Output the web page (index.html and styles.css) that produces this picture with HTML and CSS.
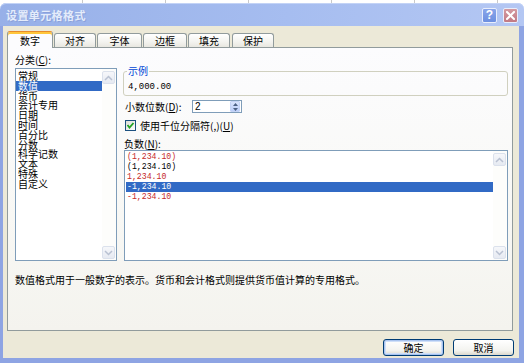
FILE: index.html
```html
<!DOCTYPE html>
<html lang="zh-CN">
<head>
<meta charset="utf-8">
<title>设置单元格格式</title>
<link rel="stylesheet" href="styles.css">
</head>
<body>
<div class="desk"></div>
<div class="window">
  <div class="titlebar">
    <span class="title">设置单元格格式</span>
    <div class="caption-buttons">
      <div class="cap-btn help">?</div>
      <div class="cap-btn close">
        <svg width="9" height="9" viewBox="0 0 9 9"><path d="M1 1 L8 8 M8 1 L1 8" stroke="#fff" stroke-width="2" stroke-linecap="square"/></svg>
      </div>
    </div>
  </div>
  <div class="frame">
    <div class="tabs">
      <div class="tab active">数字</div>
      <div class="tab w42">对齐</div>
      <div class="tab w45">字体</div>
      <div class="tab w44">边框</div>
      <div class="tab w42">填充</div>
      <div class="tab w42 last">保护</div>
    </div>
    <div class="panel">
      <div class="main">
        <div class="col-left">
          <div class="label">分类(<u>C</u>):</div>
          <div class="listbox cat">
            <div class="items">
              <div class="item">常规</div>
              <div class="item sel">数值</div>
              <div class="item">货币</div>
              <div class="item">会计专用</div>
              <div class="item">日期</div>
              <div class="item">时间</div>
              <div class="item">百分比</div>
              <div class="item">分数</div>
              <div class="item">科学记数</div>
              <div class="item">文本</div>
              <div class="item">特殊</div>
              <div class="item">自定义</div>
            </div>
            <div class="vscroll">
              <div class="sbtn"><svg width="9" height="6" viewBox="0 0 9 6"><path d="M1 5 L4.5 1.5 L8 5" fill="none" stroke="#B9C1D2" stroke-width="1.5"/></svg></div>
              <div class="sbtn"><svg width="9" height="6" viewBox="0 0 9 6"><path d="M1 1 L4.5 4.5 L8 1" fill="none" stroke="#B9C1D2" stroke-width="1.5"/></svg></div>
            </div>
          </div>
        </div>
        <div class="col-right">
          <fieldset class="sample">
            <legend>示例</legend>
            <div class="sample-value">4,000.00</div>
          </fieldset>
          <div class="row decimals">
            <span class="row-label">小数位数(<u>D</u>):</span>
            <div class="spin">
              <span class="spin-text">2</span>
              <div class="spin-btn">
                <svg width="7" height="10" viewBox="0 0 7 10"><path d="M3.5 1 L6 4 L1 4 Z M1 6 L6 6 L3.5 9 Z" fill="#4D6185"/></svg>
              </div>
            </div>
          </div>
          <div class="row check">
            <span class="checkbox">
              <svg width="9" height="9" viewBox="0 0 9 9"><path d="M1.5 4 L3.5 6.5 L7.5 2" fill="none" stroke="#21A121" stroke-width="1.8"/></svg>
            </span>
            <span>使用千位分隔符(,)(<u>U</u>)</span>
          </div>
          <div class="label neg-label">负数(<u>N</u>):</div>
          <div class="listbox neg">
            <div class="items">
              <div class="item red">(1,234.10)</div>
              <div class="item">(1,234.10)</div>
              <div class="item red">1,234.10</div>
              <div class="item sel">-1,234.10</div>
              <div class="item red">-1,234.10</div>
            </div>
            <div class="vscroll">
              <div class="sbtn"><svg width="9" height="6" viewBox="0 0 9 6"><path d="M1 5 L4.5 1.5 L8 5" fill="none" stroke="#B9C1D2" stroke-width="1.5"/></svg></div>
              <div class="sbtn"><svg width="9" height="6" viewBox="0 0 9 6"><path d="M1 1 L4.5 4.5 L8 1" fill="none" stroke="#B9C1D2" stroke-width="1.5"/></svg></div>
            </div>
          </div>
        </div>
      </div>
      <p class="desc">数值格式用于一般数字的表示。货币和会计格式则提供货币值计算的专用格式。</p>
    </div>
    <div class="buttons">
      <div class="btn default">确定</div>
      <div class="btn">取消</div>
    </div>
  </div>
</div>
</body>
</html>
```

FILE: styles.css
```css
* { box-sizing: border-box; }

html, body {
  margin: 0;
  padding: 0;
}

body {
  width: 524px;
  height: 363px;
  overflow: hidden;
  background: #ffffff;
  font-family: "Noto Sans CJK SC", "Noto Sans", sans-serif;
  font-size: 10px;
  color: #000;
}

.desk {
  height: 3px;
  background:
    repeating-linear-gradient(to right, transparent 0 82px, #c9c9c9 82px 83px),
    #ffffff;
}

.window {
  height: 360px;
  display: flex;
  flex-direction: column;
}

.titlebar {
  flex: none;
  height: 23px;
  display: flex;
  align-items: center;
  padding: 0 6px 0 6px;
  border-radius: 6px 6px 0 0;
  background: linear-gradient(to right, #97b0e8 0%, #a6bdf0 55%, #b4c7f3 100%);
  box-shadow: inset 0 1px 0 #c3d3f6;
}

.title {
  font-size: 11px;
  font-weight: bold;
  color: #e4ecfb;
  letter-spacing: 0.4px;
  text-shadow: 1px 1px 0 #8aa1da;
}

.caption-buttons {
  margin-left: auto;
  display: flex;
  gap: 6px;
  align-self: flex-start;
  margin-top: 5px;
}

.cap-btn {
  width: 15px;
  height: 15px;
  border-radius: 2px;
  border: 1px solid #e9eefc;
  display: flex;
  align-items: center;
  justify-content: center;
  color: #fff;
}

.help {
  background: linear-gradient(#8aa6ea, #6c8fe0);
  font-family: "Liberation Sans", sans-serif;
  font-weight: bold;
  font-size: 12px;
  line-height: 13px;
}

.close {
  background: linear-gradient(#d49aa1, #c27a84);
}

.frame {
  flex: 1;
  display: flex;
  flex-direction: column;
  background: #ece9d8;
  border-left: 3px solid #8ea4e3;
  border-right: 5px solid #8ea4e3;
  border-bottom: 5px solid #8ea4e3;
  padding: 5px 6px 0 4px;
}

/* tabs */
.tabs {
  display: flex;
  align-items: flex-end;
  height: 16px;
}

.tab {
  height: 14px;
  margin-left: 1px;
  border: 1px solid #919b9c;
  border-bottom: none;
  border-radius: 3px 3px 0 0;
  background: linear-gradient(#ffffff, #f3f3ef 60%, #e8e7e0);
  text-align: center;
  line-height: 13px;
  font-size: 10px;
}

.w42 { width: 42px; }
.w44 { width: 44px; }
.w45 { width: 45px; }
.tab.last { margin-left: 2px; }

.tab.active {
  width: 46px;
  height: 17px;
  margin-left: 0;
  margin-bottom: -1px;
  position: relative;
  z-index: 1;
  background: #fcfcfe;
  border-top-color: #e68b2c;
  box-shadow: inset 0 2px 0 #ffc73c;
  line-height: 17px;
}

/* panel */
.panel {
  height: 284px;
  border: 1px solid #919b9c;
  background: linear-gradient(#fcfcfe, #f8f8f5 60%, #f4f3ee);
  padding: 5px 4px 0 7px;
  display: flex;
  flex-direction: column;
}

.main {
  display: flex;
  gap: 6px;
}

.col-left {
  width: 102px;
  display: flex;
  flex-direction: column;
}

.label {
  line-height: 14px;
  height: 14px;
}

.listbox {
  display: flex;
  border: 1px solid #7f9db9;
  background: #ffffff;
}

.listbox.cat {
  margin-top: 1px;
  height: 193px;
}

.items {
  flex: 1;
  padding-top: 2px;
}

.cat .item {
  height: 9.8px;
  line-height: 9.8px;
  padding-left: 2px;
  white-space: nowrap;
}

.item.sel {
  background: #316ac5;
  color: #ffffff;
}

.vscroll {
  width: 14px;
  display: flex;
  flex-direction: column;
  justify-content: space-between;
  padding: 2px 1px 1px 0;
  background: #fdfdfb;
}

.sbtn {
  width: 13px;
  height: 13px;
  border: 1px solid #dbe1ec;
  border-radius: 2px;
  background: linear-gradient(#f6f7fa, #e6eaf2);
  display: flex;
  align-items: center;
  justify-content: center;
}

.col-right {
  flex: 1;
  display: flex;
  flex-direction: column;
}

.sample {
  margin: 13px 0 0 0;
  padding: 0 4px 3px 4px;
  border: 1px solid #d0d0bf;
  border-radius: 3px;
  min-inline-size: 0;
}

.sample legend {
  padding: 0 1px;
  margin-left: -1px;
  font-size: 10px;
  line-height: 10px;
  color: #0046d5;
}

.sample-value {
  margin-top: 6px;
  font-family: "Liberation Mono", monospace;
  font-size: 9px;
  line-height: 10px;
}

.row {
  display: flex;
  align-items: center;
  padding-left: 2px;
}

.decimals {
  margin-top: 4px;
  height: 13px;
}

.row-label {
  width: 67px;
  white-space: nowrap;
}

.spin {
  width: 50px;
  height: 13px;
  border: 1px solid #7f9db9;
  background: #fff;
  display: flex;
  align-items: center;
  padding: 0 1px 0 2px;
}

.spin-text {
  flex: 1;
  font-family: "Liberation Sans", sans-serif;
  font-size: 10px;
  line-height: 11px;
}

.spin-btn {
  width: 10px;
  height: 11px;
  border-radius: 1px;
  background: linear-gradient(#d9e4fd, #bccef8);
  border: 1px solid #c4d3f6;
  display: flex;
  align-items: center;
  justify-content: center;
}

.check {
  margin-top: 7px;
  height: 11px;
  gap: 4px;
}

.checkbox {
  width: 11px;
  height: 11px;
  border: 1px solid #1c5180;
  background: linear-gradient(135deg, #dcdcd7, #ffffff);
  display: flex;
  align-items: center;
  justify-content: center;
}

.neg-label {
  margin-top: 7px;
  height: 12px;
  line-height: 12px;
  padding-left: 1px;
}

.listbox.neg {
  margin-left: 1px;
  height: 111px;
}

.neg .items {
  padding: 1px 0 0 1px;
}

.neg .item {
  height: 10px;
  line-height: 10px;
  padding-left: 1px;
  font-family: "Liberation Mono", monospace;
  font-size: 8.2px;
  white-space: nowrap;
}

.neg .item.red {
  color: #c62a2a;
}

.desc {
  margin: 13px 0 0 0;
  line-height: 12px;
  white-space: nowrap;
}

.buttons {
  display: flex;
  justify-content: flex-end;
  gap: 9px;
  margin-top: 8px;
  margin-right: -1px;
}

.btn {
  width: 61px;
  height: 17px;
  border: 1px solid #003c74;
  border-radius: 3px;
  background: linear-gradient(#ffffff, #f3f3ef 70%, #dcd8cc);
  text-align: center;
  line-height: 15px;
}

.btn.default {
  box-shadow: inset 0 0 0 1px #a9c4ef, inset 0 0 0 2px #cfdff8;
}
```
